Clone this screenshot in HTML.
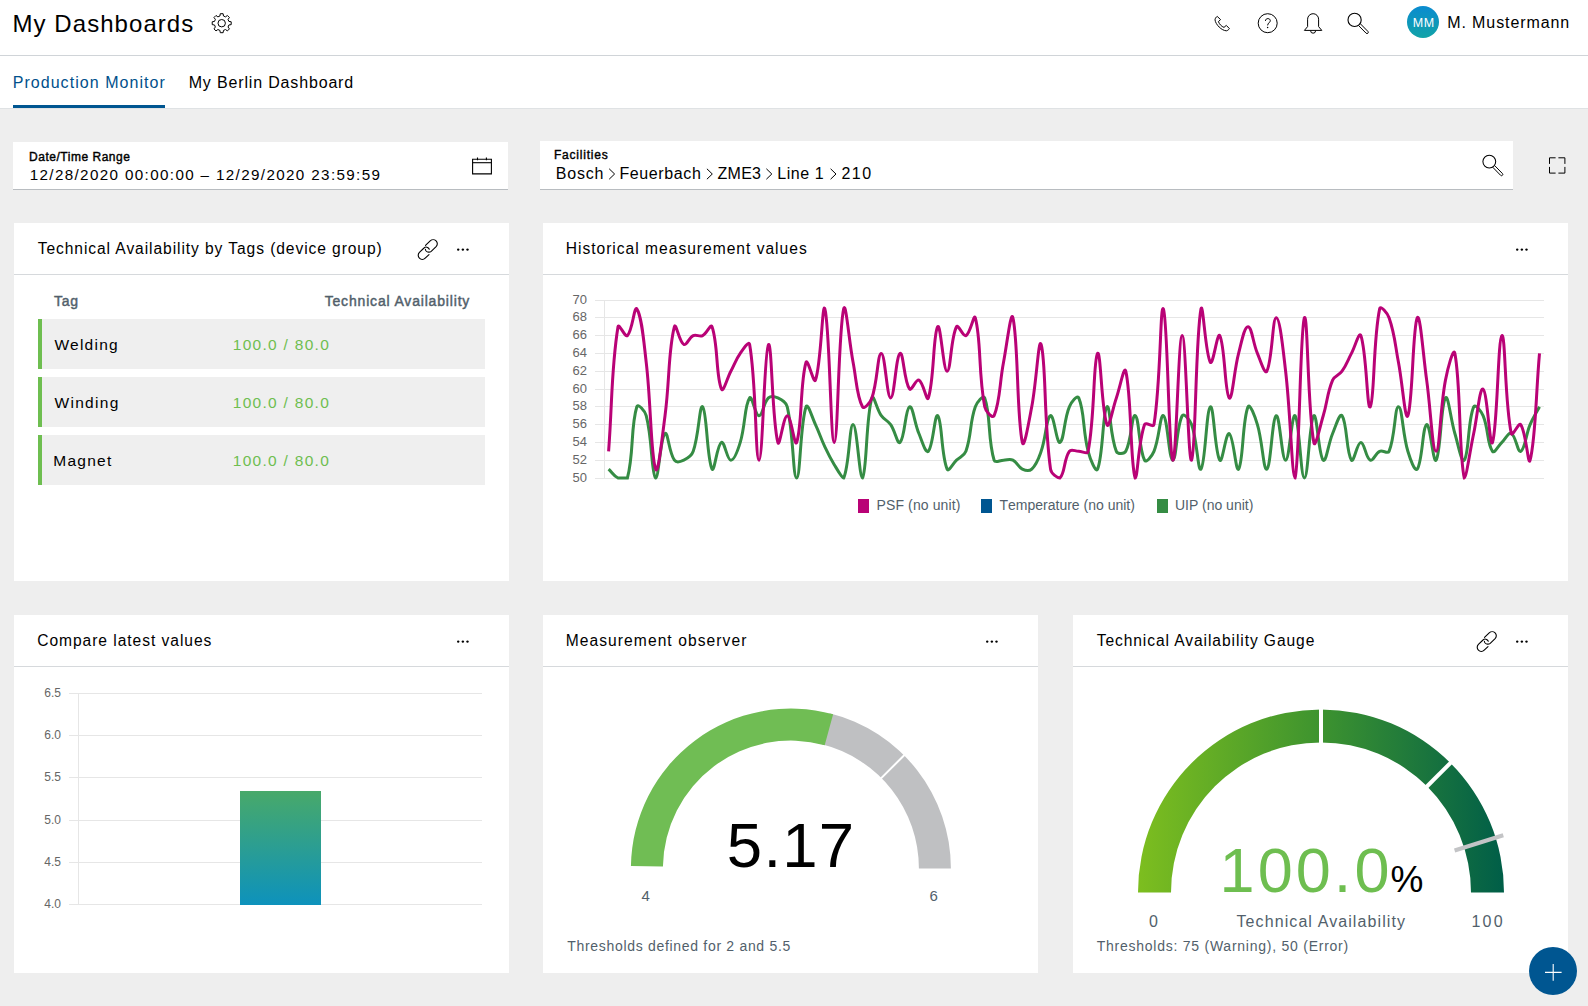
<!DOCTYPE html>
<html><head><meta charset="utf-8">
<style>
*{box-sizing:border-box;margin:0;padding:0}
html,body{width:1588px;height:1006px;overflow:hidden}
body{background:#eeeeee;font-family:"Liberation Sans",sans-serif;color:#000;position:relative}
.abs{position:absolute}
.t{position:absolute;white-space:nowrap;line-height:1}
.chev{display:inline-block;transform:scaleX(0.75);}
</style></head><body>
<div class="abs" style="left:0;top:0;width:1588px;height:55px;background:#fff"></div>
<div class="abs" style="left:0;top:55px;width:1588px;height:1px;background:#d0d4d8"></div>
<div class="t" style="left:12.50px;top:11.90px;font-size:24px;color:#000;letter-spacing:1.058px;font-weight:normal;">My Dashboards</div>

<svg class="abs" style="left:0;top:0" width="260" height="50"><path d="M228.88 21.42 L231.19 21.77 L231.19 24.63 L228.88 24.98 L228.04 27.02 L229.42 28.90 L227.40 30.92 L225.52 29.54 L223.48 30.38 L223.13 32.69 L220.27 32.69 L219.92 30.38 L217.88 29.54 L216.00 30.92 L213.98 28.90 L215.36 27.02 L214.52 24.98 L212.21 24.63 L212.21 21.77 L214.52 21.42 L215.36 19.38 L213.98 17.50 L216.00 15.48 L217.88 16.86 L219.92 16.02 L220.27 13.71 L223.13 13.71 L223.48 16.02 L225.52 16.86 L227.40 15.48 L229.42 17.50 L228.04 19.38 Z" fill="none" stroke="#000" stroke-width="1" stroke-linejoin="round"/><circle cx="221.7" cy="23.2" r="3.7" fill="none" stroke="#000" stroke-width="1"/></svg>
<svg class="abs" style="left:1200px;top:0" width="180" height="45">
<path d="M17.2 16.4 L20.6 19.6 L18.4 21.6 C19.4 24.2 21.4 26.4 24 27.4 L26.3 25.4 L29.4 28.6 C28.6 29.8 27.6 30.6 26.4 30.8 C21.6 30.6 15.6 24.6 15 19.8 C15.2 18.4 16 17 17.2 16.4 Z" fill="none" stroke="#000" stroke-width="1" stroke-linejoin="round"/>
<circle cx="67.7" cy="23.2" r="9.5" fill="none" stroke="#000" stroke-width="1"/>
<path d="M65.4 20.9 C65.6 19.3 66.6 18.6 67.9 18.6 C69.3 18.6 70.3 19.5 70.3 20.7 C70.3 22.5 67.8 22.9 67.6 25.4" fill="none" stroke="#000" stroke-width="1"/>
<circle cx="67.6" cy="27.6" r="0.75" fill="#000"/>
<path d="M104.4 30.4 L107.6 26.6 L107.6 19.2 A5.5 5.5 0 0 1 118.6 19.2 L118.6 26.6 L121.8 30.4 Z" fill="none" stroke="#000" stroke-width="1" stroke-linejoin="round"/>
<path d="M110.6 30.7 A2.5 2.5 0 0 0 115.6 30.7" fill="none" stroke="#000" stroke-width="1"/>
<circle cx="154.6" cy="19.9" r="6.6" fill="none" stroke="#000" stroke-width="1.1"/>
<path d="M160.2 23.6 L167.9 31.4 A1.25 1.25 0 0 1 166.1 33.2 L158.4 25.4" fill="none" stroke="#000" stroke-width="1"/>
</svg>
<svg class="abs" style="left:1405px;top:4px" width="36" height="36">
<defs><linearGradient id="av" x1="0" y1="0" x2="0" y2="1"><stop offset="0" stop-color="#0a8bd0"/><stop offset="1" stop-color="#12a3a7"/></linearGradient></defs>
<circle cx="18" cy="18" r="16" fill="url(#av)"/></svg>
<div class="t" style="left:1412.80px;top:17.38px;font-size:12.5px;color:#fff;letter-spacing:0.600px;font-weight:normal;">MM</div>

<div class="t" style="left:1447.20px;top:15.40px;font-size:16px;color:#000;letter-spacing:0.900px;font-weight:normal;">M. Mustermann</div>

<div class="abs" style="left:0;top:56px;width:1588px;height:52px;background:#fff"></div>
<div class="abs" style="left:0;top:108px;width:1588px;height:1px;background:#dfe2e4"></div>
<div class="t" style="left:12.70px;top:75.20px;font-size:16px;color:#00508b;letter-spacing:1.047px;font-weight:normal;">Production Monitor</div>

<div class="t" style="left:188.70px;top:75.20px;font-size:16px;color:#000;letter-spacing:0.839px;font-weight:normal;">My Berlin Dashboard</div>

<div class="abs" style="left:13px;top:105px;width:152px;height:3px;background:#005691"></div>
<div class="abs" style="left:13px;top:142px;width:495px;height:47px;background:#fff"></div>
<div class="abs" style="left:13px;top:189px;width:495px;height:1px;background:#b8bcc0"></div>
<div class="t" style="left:29.00px;top:150.70px;font-size:12px;color:#000;letter-spacing:0.521px;font-weight:normal;-webkit-text-stroke:0.4px #000">Date/Time Range</div>

<div class="t" style="left:29.70px;top:166.88px;font-size:15.2px;color:#000;letter-spacing:1.367px;font-weight:normal;">12/28/2020 00:00:00 – 12/29/2020 23:59:59</div>

<svg class="abs" style="left:460px;top:150px" width="40" height="30">
<path d="M12.6 9.2 L31.4 9.2 L31.4 23.9 L12.6 23.9 Z" fill="none" stroke="#000" stroke-width="1.1"/>
<path d="M12.6 12.7 L31.4 12.7" stroke="#000" stroke-width="1.1"/>
<path d="M17.5 7.6 L17.5 10.2 M26.4 7.6 L26.4 10.2" stroke="#000" stroke-width="1.1"/>
</svg>
<div class="abs" style="left:540px;top:141px;width:973px;height:48px;background:#fff"></div>
<div class="abs" style="left:540px;top:189px;width:973px;height:1px;background:#b8bcc0"></div>
<div class="t" style="left:554.00px;top:149.20px;font-size:12px;color:#000;letter-spacing:0.789px;font-weight:normal;-webkit-text-stroke:0.4px #000">Facilities</div>

<div class="t" style="left:555.70px;top:165.50px;font-size:16px;color:#000;letter-spacing:0.825px;font-weight:normal;">Bosch</div>

<div class="t" style="left:619.40px;top:165.50px;font-size:16px;color:#000;letter-spacing:0.625px;font-weight:normal;">Feuerbach</div>

<div class="t" style="left:717.50px;top:165.50px;font-size:16px;color:#000;letter-spacing:0.267px;font-weight:normal;">ZME3</div>

<div class="t" style="left:777.20px;top:165.50px;font-size:16px;color:#000;letter-spacing:0.580px;font-weight:normal;">Line 1</div>

<div class="t" style="left:841.40px;top:165.50px;font-size:16px;color:#000;letter-spacing:1.550px;font-weight:normal;">210</div>

<svg class="abs" style="left:0;top:0" width="900" height="200"><path d="M609.2 168.8 L614.6 174 L609.2 179.2" fill="none" stroke="#000" stroke-width="1"/><path d="M706.9 168.8 L712.3 174 L706.9 179.2" fill="none" stroke="#000" stroke-width="1"/><path d="M766.4 168.8 L771.8 174 L766.4 179.2" fill="none" stroke="#000" stroke-width="1"/><path d="M830.6 168.8 L836.0 174 L830.6 179.2" fill="none" stroke="#000" stroke-width="1"/></svg>
<svg class="abs" style="left:1475px;top:145px" width="40" height="40">
<circle cx="14.3" cy="16.6" r="6.4" fill="none" stroke="#000" stroke-width="1.05"/>
<path d="M19.4 20.3 L27.4 28.5 A1.25 1.25 0 0 1 25.6 30.3 L17.6 22.1" fill="none" stroke="#000" stroke-width="1"/>
</svg>
<svg class="abs" style="left:1540px;top:150px" width="30" height="30">
<path d="M9.5 13.9 L9.5 7.8 L15.6 7.8 M18.4 7.8 L24.9 7.8 L24.9 13.9 M24.9 16.9 L24.9 23.1 L18.4 23.1 M15.6 23.1 L9.5 23.1 L9.5 16.9" fill="none" stroke="#000" stroke-width="1"/>
</svg>
<div class="abs" style="left:14px;top:223px;width:495px;height:358px;background:#fff"></div>
<div class="abs" style="left:14px;top:274px;width:495px;height:1px;background:#d6d9dc"></div>
<div class="t" style="left:37.70px;top:241.44px;font-size:15.6px;color:#000;letter-spacing:0.918px;font-weight:normal;">Technical Availability by Tags (device group)</div>
<svg class="abs" style="left:449px;top:238px" width="30" height="24"><circle cx="9.2" cy="11.6" r="1.2" fill="#000"/><circle cx="13.85" cy="11.6" r="1.2" fill="#000"/><circle cx="18.5" cy="11.6" r="1.2" fill="#000"/></svg>
<svg class="abs" style="left:0;top:0;overflow:visible" width="1" height="1"><g transform="translate(0,0)" fill="none" stroke="#000" stroke-width="1.1" stroke-linecap="round">
<path d="M425.5 245.4 L430.2 240.9 C431.9 239.3 434.5 239.3 436.1 240.9 C437.7 242.5 437.7 245.1 436.1 246.7 L431.2 251.3 C429.9 252.4 427.4 252.4 426.1 251 C425.6 250.4 425.4 249.8 425.4 249.3"/>
<path d="M429.3 249.3 C428.9 248.5 428.3 247.9 427.6 247.5 C426.5 246.9 425 247 424 248 L419.4 252.4 C417.8 254 417.8 256.6 419.4 258.2 C421 259.8 423.6 259.8 425.2 258.2 L429 254.6"/>
</g></svg>

<div class="abs" style="left:543px;top:223px;width:1025px;height:358px;background:#fff"></div>
<div class="abs" style="left:543px;top:274px;width:1025px;height:1px;background:#d6d9dc"></div>
<div class="t" style="left:565.70px;top:241.44px;font-size:15.6px;color:#000;letter-spacing:0.993px;font-weight:normal;">Historical measurement values</div>
<svg class="abs" style="left:1508px;top:238px" width="30" height="24"><circle cx="9.2" cy="11.6" r="1.2" fill="#000"/><circle cx="13.85" cy="11.6" r="1.2" fill="#000"/><circle cx="18.5" cy="11.6" r="1.2" fill="#000"/></svg>

<div class="abs" style="left:14px;top:615px;width:495px;height:358px;background:#fff"></div>
<div class="abs" style="left:14px;top:666px;width:495px;height:1px;background:#d6d9dc"></div>
<div class="t" style="left:37.20px;top:633.44px;font-size:15.6px;color:#000;letter-spacing:0.950px;font-weight:normal;">Compare latest values</div>
<svg class="abs" style="left:449px;top:630px" width="30" height="24"><circle cx="9.2" cy="11.6" r="1.2" fill="#000"/><circle cx="13.85" cy="11.6" r="1.2" fill="#000"/><circle cx="18.5" cy="11.6" r="1.2" fill="#000"/></svg>

<div class="abs" style="left:543px;top:615px;width:495px;height:358px;background:#fff"></div>
<div class="abs" style="left:543px;top:666px;width:495px;height:1px;background:#d6d9dc"></div>
<div class="t" style="left:565.70px;top:633.44px;font-size:15.6px;color:#000;letter-spacing:1.068px;font-weight:normal;">Measurement observer</div>
<svg class="abs" style="left:978px;top:630px" width="30" height="24"><circle cx="9.2" cy="11.6" r="1.2" fill="#000"/><circle cx="13.85" cy="11.6" r="1.2" fill="#000"/><circle cx="18.5" cy="11.6" r="1.2" fill="#000"/></svg>

<div class="abs" style="left:1073px;top:615px;width:495px;height:358px;background:#fff"></div>
<div class="abs" style="left:1073px;top:666px;width:495px;height:1px;background:#d6d9dc"></div>
<div class="t" style="left:1096.70px;top:633.44px;font-size:15.6px;color:#000;letter-spacing:0.911px;font-weight:normal;">Technical Availability Gauge</div>
<svg class="abs" style="left:1508px;top:630px" width="30" height="24"><circle cx="9.2" cy="11.6" r="1.2" fill="#000"/><circle cx="13.85" cy="11.6" r="1.2" fill="#000"/><circle cx="18.5" cy="11.6" r="1.2" fill="#000"/></svg>
<svg class="abs" style="left:0;top:0;overflow:visible" width="1" height="1"><g transform="translate(1059,392)" fill="none" stroke="#000" stroke-width="1.1" stroke-linecap="round">
<path d="M425.5 245.4 L430.2 240.9 C431.9 239.3 434.5 239.3 436.1 240.9 C437.7 242.5 437.7 245.1 436.1 246.7 L431.2 251.3 C429.9 252.4 427.4 252.4 426.1 251 C425.6 250.4 425.4 249.8 425.4 249.3"/>
<path d="M429.3 249.3 C428.9 248.5 428.3 247.9 427.6 247.5 C426.5 246.9 425 247 424 248 L419.4 252.4 C417.8 254 417.8 256.6 419.4 258.2 C421 259.8 423.6 259.8 425.2 258.2 L429 254.6"/>
</g></svg>

<div class="t" style="left:53.90px;top:294.10px;font-size:14px;color:#525f6b;letter-spacing:0.750px;font-weight:normal;-webkit-text-stroke:0.45px #525f6b">Tag</div>

<div class="t" style="left:324.70px;top:294.10px;font-size:14px;color:#525f6b;letter-spacing:0.824px;font-weight:normal;-webkit-text-stroke:0.45px #525f6b">Technical Availability</div>

<div class="abs" style="left:38px;top:319px;width:447px;height:50px;background:#efefef"></div>
<div class="abs" style="left:38px;top:319px;width:4px;height:50px;background:#6ebe50"></div>
<div class="t" style="left:54.50px;top:336.72px;font-size:15.5px;color:#000;letter-spacing:1.233px;font-weight:normal;">Welding</div>

<div class="t" style="left:232.80px;top:336.72px;font-size:15.5px;color:#6ebe50;letter-spacing:1.282px;font-weight:normal;">100.0 / 80.0</div>

<div class="abs" style="left:38px;top:377px;width:447px;height:50px;background:#efefef"></div>
<div class="abs" style="left:38px;top:377px;width:4px;height:50px;background:#6ebe50"></div>
<div class="t" style="left:54.50px;top:394.72px;font-size:15.5px;color:#000;letter-spacing:1.300px;font-weight:normal;">Winding</div>

<div class="t" style="left:232.80px;top:394.72px;font-size:15.5px;color:#6ebe50;letter-spacing:1.282px;font-weight:normal;">100.0 / 80.0</div>

<div class="abs" style="left:38px;top:435px;width:447px;height:50px;background:#efefef"></div>
<div class="abs" style="left:38px;top:435px;width:4px;height:50px;background:#6ebe50"></div>
<div class="t" style="left:53.30px;top:452.72px;font-size:15.5px;color:#000;letter-spacing:1.260px;font-weight:normal;">Magnet</div>

<div class="t" style="left:232.80px;top:452.72px;font-size:15.5px;color:#6ebe50;letter-spacing:1.282px;font-weight:normal;">100.0 / 80.0</div>

<svg class="abs" style="left:0;top:0" width="1588" height="600">
<path d="M595 300.5 L1544 300.5" stroke="#e6e6e6" stroke-width="1"/>
<text x="587" y="303.5" text-anchor="end" font-size="13" fill="#666666" font-family="Liberation Sans">70</text>
<path d="M595 317.5 L1544 317.5" stroke="#e6e6e6" stroke-width="1"/>
<text x="587" y="320.5" text-anchor="end" font-size="13" fill="#666666" font-family="Liberation Sans">68</text>
<path d="M595 335.5 L1544 335.5" stroke="#e6e6e6" stroke-width="1"/>
<text x="587" y="338.5" text-anchor="end" font-size="13" fill="#666666" font-family="Liberation Sans">66</text>
<path d="M595 353.5 L1544 353.5" stroke="#e6e6e6" stroke-width="1"/>
<text x="587" y="356.5" text-anchor="end" font-size="13" fill="#666666" font-family="Liberation Sans">64</text>
<path d="M595 371.5 L1544 371.5" stroke="#e6e6e6" stroke-width="1"/>
<text x="587" y="374.5" text-anchor="end" font-size="13" fill="#666666" font-family="Liberation Sans">62</text>
<path d="M595 389.5 L1544 389.5" stroke="#e6e6e6" stroke-width="1"/>
<text x="587" y="392.5" text-anchor="end" font-size="13" fill="#666666" font-family="Liberation Sans">60</text>
<path d="M595 406.5 L1544 406.5" stroke="#e6e6e6" stroke-width="1"/>
<text x="587" y="409.5" text-anchor="end" font-size="13" fill="#666666" font-family="Liberation Sans">58</text>
<path d="M595 424.5 L1544 424.5" stroke="#e6e6e6" stroke-width="1"/>
<text x="587" y="427.5" text-anchor="end" font-size="13" fill="#666666" font-family="Liberation Sans">56</text>
<path d="M595 442.5 L1544 442.5" stroke="#e6e6e6" stroke-width="1"/>
<text x="587" y="445.5" text-anchor="end" font-size="13" fill="#666666" font-family="Liberation Sans">54</text>
<path d="M595 460.5 L1544 460.5" stroke="#e6e6e6" stroke-width="1"/>
<text x="587" y="463.5" text-anchor="end" font-size="13" fill="#666666" font-family="Liberation Sans">52</text>
<path d="M595 478.5 L1544 478.5" stroke="#e6e6e6" stroke-width="1"/>
<text x="587" y="481.5" text-anchor="end" font-size="13" fill="#666666" font-family="Liberation Sans">50</text>
<path d="M604.5 300 L604.5 478" stroke="#e6e6e6" stroke-width="1"/>
<path d="M608.60 469.10 C612.36 472.66 613.65 475.94 618.00 478.00 C621.17 478.00 626.54 478.00 627.41 478.00 C634.06 452.82 630.44 427.91 636.81 406.80 C637.96 402.99 644.93 410.85 646.21 415.70 C652.45 439.33 651.25 473.86 655.62 478.00 C658.77 478.00 660.38 437.89 665.02 433.50 C667.90 430.77 668.77 452.18 674.42 460.20 C676.30 462.86 680.66 461.70 683.82 460.20 C688.18 458.14 691.56 456.03 693.23 451.30 C699.08 434.67 699.48 403.82 702.63 406.80 C707.00 410.94 706.84 459.27 712.03 469.10 C714.36 473.51 717.04 444.48 721.44 442.40 C724.56 440.92 727.08 460.20 730.84 460.20 C734.60 460.20 737.93 450.05 740.24 442.40 C745.46 425.13 744.43 405.30 749.64 397.90 C751.95 394.62 755.29 415.70 759.05 415.70 C762.81 415.70 763.32 402.75 768.45 397.90 C770.85 395.63 774.69 396.40 777.85 397.90 C782.21 399.96 786.11 401.91 787.26 406.80 C793.63 433.95 792.90 478.00 796.66 478.00 C800.42 478.00 800.19 423.48 806.06 406.80 C807.71 402.12 812.05 417.32 815.47 424.60 C819.57 433.34 820.77 438.11 824.87 446.85 C828.29 454.13 830.12 457.77 834.27 464.65 C837.64 470.23 841.93 478.00 843.68 478.00 C849.46 465.69 849.32 424.60 853.08 424.60 C856.84 424.60 859.46 478.00 862.48 478.00 C866.98 471.61 865.86 417.84 871.88 397.90 C873.39 392.92 876.71 409.20 881.29 415.70 C884.23 419.88 887.75 420.42 890.69 424.60 C895.27 431.10 897.43 444.92 900.09 442.40 C904.96 437.80 905.24 408.81 909.50 406.80 C912.77 405.25 914.50 423.10 918.90 433.50 C922.03 440.90 925.64 453.82 928.30 451.30 C933.17 446.70 934.66 412.82 937.71 415.70 C942.19 419.94 941.04 454.73 947.11 469.10 C948.56 472.53 952.75 463.76 956.51 460.20 C960.27 456.64 964.25 456.03 965.91 451.30 C971.77 434.67 969.46 423.43 975.32 406.80 C976.98 402.07 983.44 394.26 984.72 397.90 C990.96 415.62 987.58 438.52 994.12 460.20 C995.10 463.44 999.76 460.20 1003.53 460.20 C1007.29 460.20 1009.76 458.70 1012.93 460.20 C1017.29 462.26 1017.97 467.04 1022.33 469.10 C1025.50 470.60 1029.34 471.37 1031.74 469.10 C1036.86 464.25 1038.48 458.85 1041.14 451.30 C1046.00 437.49 1046.29 417.71 1050.54 415.70 C1053.81 414.15 1056.67 443.95 1059.94 442.40 C1064.20 440.39 1063.78 419.97 1069.35 406.80 C1071.30 402.17 1077.30 394.47 1078.75 397.90 C1084.82 412.27 1082.67 430.53 1088.15 451.30 C1090.19 459.01 1095.73 473.41 1097.56 469.10 C1103.26 455.61 1102.59 410.94 1106.96 406.80 C1110.11 403.82 1110.13 436.55 1116.36 451.30 C1117.65 454.35 1124.23 454.20 1125.77 451.30 C1131.76 439.96 1131.80 414.11 1135.17 415.70 C1139.33 417.67 1138.72 449.12 1144.57 460.20 C1146.24 463.36 1152.02 455.93 1153.97 451.30 C1159.54 438.13 1160.01 414.11 1163.38 415.70 C1167.53 417.67 1169.02 460.20 1172.78 460.20 C1176.54 460.20 1176.33 426.78 1182.18 415.70 C1183.85 412.54 1189.92 419.87 1191.59 424.60 C1197.44 441.23 1197.84 472.08 1200.99 469.10 C1205.36 464.96 1206.35 408.71 1210.39 406.80 C1213.87 405.15 1214.85 453.18 1219.80 460.20 C1222.38 463.86 1225.93 431.95 1229.20 433.50 C1233.45 435.51 1235.83 473.04 1238.60 469.10 C1243.35 462.36 1242.30 420.29 1248.00 406.80 C1249.83 402.49 1255.10 416.95 1257.41 424.60 C1262.62 441.87 1263.38 470.72 1266.81 469.10 C1270.90 467.16 1272.12 417.64 1276.21 415.70 C1279.64 414.08 1281.85 460.20 1285.62 460.20 C1289.38 460.20 1291.87 412.72 1295.02 415.70 C1299.39 419.84 1300.66 478.00 1304.42 478.00 C1308.18 478.00 1309.46 419.84 1313.83 415.70 C1316.98 412.72 1318.59 455.81 1323.23 460.20 C1326.11 462.93 1328.23 443.90 1332.63 433.50 C1335.76 426.10 1339.73 412.42 1342.03 415.70 C1347.25 423.10 1346.22 452.80 1351.44 460.20 C1353.74 463.48 1357.08 442.40 1360.84 442.40 C1364.60 442.40 1365.66 458.03 1370.24 460.20 C1373.19 461.59 1375.29 453.36 1379.65 451.30 C1382.81 449.80 1387.76 454.35 1389.05 451.30 C1395.28 436.55 1394.69 406.80 1398.45 406.80 C1402.21 406.80 1402.64 434.03 1407.86 451.30 C1410.16 458.95 1414.95 472.38 1417.26 469.10 C1422.47 461.70 1422.50 426.57 1426.66 424.60 C1430.03 423.01 1433.29 464.14 1436.06 460.20 C1440.81 453.46 1440.72 404.64 1445.47 397.90 C1448.24 393.96 1450.62 419.41 1454.87 433.50 C1458.14 444.33 1461.69 463.86 1464.27 460.20 C1469.22 453.18 1467.60 421.17 1473.68 406.80 C1475.13 403.37 1481.12 411.07 1483.08 415.70 C1488.64 428.87 1486.92 443.40 1492.48 451.30 C1494.44 454.08 1498.12 445.96 1501.89 442.40 C1505.65 438.84 1508.34 432.11 1511.29 433.50 C1515.87 435.67 1517.56 452.78 1520.69 451.30 C1525.09 449.22 1525.70 435.00 1530.09 424.60 C1533.22 417.20 1535.74 413.92 1539.50 406.80" fill="none" stroke="#358c44" stroke-width="3" stroke-linejoin="miter" stroke-linecap="butt"/>
<path d="M608.60 451.30 C612.36 401.46 611.19 368.63 618.00 326.70 C618.71 322.35 625.05 337.83 627.41 335.60 C632.57 330.71 634.23 305.24 636.81 308.90 C641.75 315.92 643.69 340.78 646.21 362.30 C651.21 404.86 650.62 454.91 655.62 469.10 C658.14 476.27 662.18 437.19 665.02 415.70 C669.70 380.23 668.28 349.95 674.42 326.70 C675.80 321.47 679.25 342.33 683.82 344.50 C686.77 345.89 688.87 337.66 693.23 335.60 C696.39 334.10 699.47 337.10 702.63 335.60 C706.99 333.54 710.75 323.06 712.03 326.70 C718.27 344.42 715.74 375.51 721.44 389.00 C723.26 393.31 727.08 378.32 730.84 371.20 C734.60 364.08 735.66 359.90 740.24 353.40 C743.19 349.22 748.89 340.21 749.64 344.50 C756.41 382.93 755.29 460.20 759.05 460.20 C762.81 460.20 764.38 348.35 768.45 344.50 C771.90 341.23 772.01 420.29 777.85 442.40 C779.54 448.77 783.50 415.70 787.26 415.70 C791.02 415.70 794.71 447.95 796.66 442.40 C802.23 426.59 800.04 382.24 806.06 362.30 C807.57 357.32 813.82 384.78 815.47 380.10 C821.34 363.42 822.24 300.20 824.87 308.90 C829.76 325.12 830.51 442.40 834.27 442.40 C838.03 442.40 838.32 331.70 843.68 308.90 C845.84 300.00 848.99 341.00 853.08 362.30 C856.51 380.16 856.63 395.72 862.48 406.80 C864.15 409.96 870.22 402.63 871.88 397.90 C877.74 381.27 877.53 353.40 881.29 353.40 C885.05 353.40 886.93 397.90 890.69 397.90 C894.45 397.90 895.94 355.37 900.09 353.40 C903.46 351.81 903.93 381.10 909.50 389.00 C911.45 391.78 915.95 378.71 918.90 380.10 C923.48 382.27 926.66 402.58 928.30 397.90 C934.18 381.22 933.10 333.24 937.71 326.70 C940.62 322.56 943.35 371.20 947.11 371.20 C950.87 371.20 950.66 337.78 956.51 326.70 C958.18 323.54 962.97 336.99 965.91 335.60 C970.49 333.43 973.94 312.57 975.32 317.80 C981.46 341.05 978.15 372.59 984.72 406.80 C985.67 411.75 992.67 419.13 994.12 415.70 C1000.20 401.33 999.44 383.60 1003.53 362.30 C1006.96 344.44 1010.92 309.25 1012.93 317.80 C1018.44 341.29 1016.52 414.90 1022.33 442.40 C1024.04 450.50 1028.96 421.24 1031.74 406.80 C1036.48 382.08 1038.62 336.15 1041.14 344.50 C1046.14 361.07 1043.72 420.71 1050.54 469.10 C1051.25 474.11 1057.58 478.00 1059.94 478.00 C1065.11 473.11 1063.70 459.32 1069.35 451.30 C1071.22 448.64 1074.99 451.30 1078.75 451.30 C1082.51 451.30 1087.50 454.72 1088.15 451.30 C1095.02 415.56 1093.21 359.57 1097.56 353.40 C1100.73 348.89 1101.56 411.83 1106.96 424.60 C1109.09 429.63 1112.60 408.58 1116.36 397.90 C1120.12 387.22 1124.19 364.51 1125.77 371.20 C1131.72 396.55 1130.17 463.81 1135.17 478.00 C1137.69 478.00 1138.16 442.80 1144.57 424.60 C1145.68 421.44 1153.41 428.07 1153.97 424.60 C1160.93 381.79 1160.11 302.72 1163.38 308.90 C1167.64 316.96 1168.66 454.35 1172.78 460.20 C1176.18 465.03 1178.42 335.60 1182.18 335.60 C1185.94 335.60 1188.19 465.03 1191.59 460.20 C1195.71 454.35 1195.45 337.74 1200.99 308.90 C1202.97 300.00 1205.45 355.28 1210.39 362.30 C1212.97 365.96 1217.46 331.19 1219.80 335.60 C1224.99 345.43 1224.83 393.76 1229.20 397.90 C1232.35 400.88 1233.96 370.95 1238.60 353.40 C1241.49 342.47 1244.24 326.70 1248.00 326.70 C1251.77 326.70 1253.01 343.00 1257.41 353.40 C1260.53 360.80 1264.77 375.06 1266.81 371.20 C1272.30 360.82 1272.45 317.80 1276.21 317.80 C1279.97 317.80 1283.09 349.68 1285.62 371.20 C1290.61 413.76 1292.01 478.00 1295.02 478.00 C1299.53 465.19 1300.19 325.81 1304.42 317.80 C1307.72 311.57 1307.69 410.47 1313.83 442.40 C1315.21 449.63 1319.96 426.53 1323.23 415.70 C1327.48 401.61 1327.07 393.27 1332.63 380.10 C1334.59 375.47 1339.09 375.38 1342.03 371.20 C1346.61 364.70 1347.68 360.52 1351.44 353.40 C1355.20 346.28 1359.19 330.92 1360.84 335.60 C1366.72 352.28 1367.07 411.31 1370.24 406.80 C1374.59 400.63 1373.00 340.36 1379.65 308.90 C1380.52 304.76 1387.38 313.07 1389.05 317.80 C1394.90 334.43 1395.02 344.44 1398.45 362.30 C1402.54 383.60 1405.18 422.03 1407.86 415.70 C1412.70 404.23 1412.67 326.48 1417.26 317.80 C1420.20 312.24 1423.15 355.15 1426.66 380.10 C1430.67 408.55 1432.30 451.30 1436.06 451.30 C1439.83 451.30 1440.07 408.19 1445.47 380.10 C1447.59 369.03 1453.48 346.17 1454.87 353.40 C1461.00 385.33 1458.76 454.51 1464.27 478.00 C1466.28 478.00 1469.91 451.30 1473.68 433.50 C1477.44 415.70 1479.65 387.38 1483.08 389.00 C1487.17 390.94 1489.96 449.57 1492.48 442.40 C1497.48 428.21 1497.96 337.46 1501.89 335.60 C1505.48 333.90 1504.64 402.04 1511.29 433.50 C1512.16 437.64 1518.73 421.82 1520.69 424.60 C1526.26 432.50 1528.17 467.48 1530.09 460.20 C1535.69 439.00 1535.74 396.12 1539.50 353.40" fill="none" stroke="#b90276" stroke-width="3" stroke-linejoin="miter" stroke-linecap="butt"/>
<rect x="858" y="499" width="11" height="14" fill="#b90276"/>
<rect x="981" y="499" width="11" height="14" fill="#005691"/>
<rect x="1157" y="499" width="11" height="14" fill="#358c44"/>
<text x="876.5" y="510" font-size="14" fill="#525f6b" font-family="Liberation Sans" style="font-kerning:none" letter-spacing="0.12">PSF (no unit)</text>
<text x="999.5" y="510" font-size="14" fill="#525f6b" font-family="Liberation Sans" style="font-kerning:none">Temperature (no unit)</text>
<text x="1175" y="510" font-size="14" fill="#525f6b" font-family="Liberation Sans">UIP (no unit)</text>
</svg>

<svg class="abs" style="left:0;top:600px" width="540" height="400">
<defs><linearGradient id="bg" x1="0" y1="0" x2="0" y2="1"><stop offset="0" stop-color="#48a96a"/><stop offset="1" stop-color="#0d92bc"/></linearGradient></defs>
<path d="M69 93.5 L482 93.5" stroke="#e6e6e6" stroke-width="1"/>
<text x="61" y="96.7" text-anchor="end" font-size="12" fill="#666666" font-family="Liberation Sans">6.5</text>
<path d="M69 135.5 L482 135.5" stroke="#e6e6e6" stroke-width="1"/>
<text x="61" y="138.7" text-anchor="end" font-size="12" fill="#666666" font-family="Liberation Sans">6.0</text>
<path d="M69 177.5 L482 177.5" stroke="#e6e6e6" stroke-width="1"/>
<text x="61" y="180.7" text-anchor="end" font-size="12" fill="#666666" font-family="Liberation Sans">5.5</text>
<path d="M69 220.5 L482 220.5" stroke="#e6e6e6" stroke-width="1"/>
<text x="61" y="223.7" text-anchor="end" font-size="12" fill="#666666" font-family="Liberation Sans">5.0</text>
<path d="M69 262.5 L482 262.5" stroke="#e6e6e6" stroke-width="1"/>
<text x="61" y="265.7" text-anchor="end" font-size="12" fill="#666666" font-family="Liberation Sans">4.5</text>
<path d="M69 304.5 L482 304.5" stroke="#e6e6e6" stroke-width="1"/>
<text x="61" y="307.7" text-anchor="end" font-size="12" fill="#666666" font-family="Liberation Sans">4.0</text>
<path d="M78.5 93 L78.5 305" stroke="#e6e6e6" stroke-width="1"/>
<rect x="240" y="191" width="81" height="114" fill="url(#bg)"/>
</svg>

<svg class="abs" style="left:0;top:0" width="1588" height="1006">
<path d="M829.61 713.25 A160 160 0 0 1 950.90 868.50 L918.90 868.50 A128 128 0 0 0 821.87 744.30 Z" fill="#bfc0c2"/>
<path d="M630.92 866.09 A160 160 0 0 1 833.12 714.27 L824.68 745.14 A128 128 0 0 0 662.92 866.59 Z" fill="#70bd54"/>
<path d="M880.00 779.40 L905.45 753.95" stroke="#fff" stroke-width="2"/>
<defs><linearGradient id="g2" gradientUnits="userSpaceOnUse" x1="1138" y1="0" x2="1504" y2="0"><stop offset="0" stop-color="#7dbe1f"/><stop offset="0.5" stop-color="#3d932f"/><stop offset="1" stop-color="#005e48"/></linearGradient></defs>
<path d="M1138.00 892.40 A183 183 0 0 1 1504.00 892.40 L1471.00 892.40 A150 150 0 0 0 1171.00 892.40 Z" fill="url(#g2)"/>
<path d="M1321.00 744.40 L1321.00 707.40" stroke="#fff" stroke-width="4"/>
<path d="M1425.65 787.75 L1451.81 761.59" stroke="#fff" stroke-width="4"/>
<path d="M1454.59 850.53 L1503.26 835.28" stroke="#c3c4c6" stroke-width="4"/>
</svg>

<div class="t" style="left:726.80px;top:814.23px;font-size:63.5px;color:#000;letter-spacing:1.267px;font-weight:normal;">5.17</div>

<div class="t" style="left:641.60px;top:888.45px;font-size:15px;color:#525f6b;letter-spacing:1.700px;font-weight:normal;">4</div>

<div class="t" style="left:929.50px;top:888.45px;font-size:15px;color:#525f6b;letter-spacing:1.800px;font-weight:normal;">6</div>

<div class="t" style="left:567.30px;top:939.40px;font-size:14px;color:#525f6b;letter-spacing:0.690px;font-weight:normal;">Thresholds defined for 2 and 5.5</div>

<div class="t" style="left:1219.60px;top:839.05px;font-size:63px;color:#6ebe50;letter-spacing:3.050px;font-weight:normal;">100.0</div>

<div class="t" style="left:1390.50px;top:861.15px;font-size:37px;color:#000;letter-spacing:-0.700px;font-weight:normal;">%</div>

<div class="t" style="left:1149.00px;top:914.10px;font-size:16px;color:#525f6b;letter-spacing:2.200px;font-weight:normal;">0</div>

<div class="t" style="left:1236.50px;top:914.10px;font-size:16px;color:#525f6b;letter-spacing:1.090px;font-weight:normal;">Technical Availability</div>

<div class="t" style="left:1471.40px;top:914.10px;font-size:16px;color:#525f6b;letter-spacing:2.250px;font-weight:normal;">100</div>

<div class="t" style="left:1096.70px;top:939.30px;font-size:14px;color:#525f6b;letter-spacing:0.754px;font-weight:normal;">Thresholds: 75 (Warning), 50 (Error)</div>

<svg class="abs" style="left:1525px;top:943px" width="56" height="56">
<circle cx="28" cy="28" r="24" fill="#005691"/>
<path d="M20 29.4 L36.6 29.4 M28.2 21 L28.2 37.7" stroke="#fff" stroke-width="1.1"/>
</svg>
</body></html>
